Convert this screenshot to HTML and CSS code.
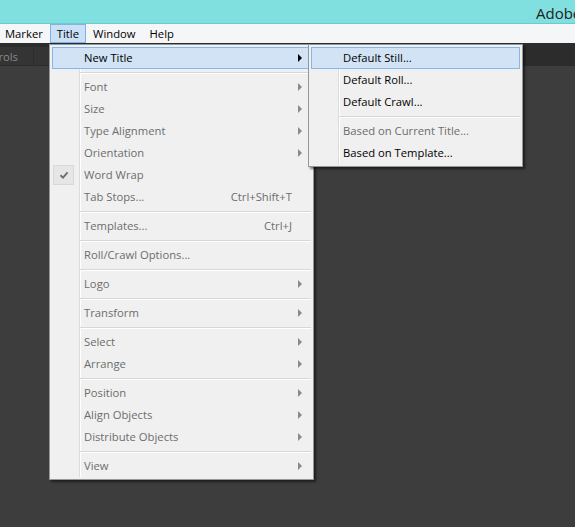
FILE: index.html
```html
<!DOCTYPE html>
<html>
<head>
<meta charset="utf-8">
<link rel="stylesheet" href="styles.css">
</head>
<body>
<div class="titlebar"><span class="app-title">Adobe Premiere Pro</span></div>
<div class="menubar">
  <span class="mb-item first">Marker</span><span class="mb-item active">Title</span><span class="mb-item">Window</span><span class="mb-item">Help</span>
</div>
<div class="workspace">
  <div class="tabstrip">
    <div class="tab"><span class="tab-text">Controls</span></div>
    <div class="tab tab2"></div>
  </div>
</div>

<div class="menu main-menu">
  <div class="menu-list">
    <div class="item active"><span class="icon"></span><span class="label">New Title</span><span class="arrow"></span></div>
    <div class="sep"></div>
    <div class="item disabled"><span class="icon"></span><span class="label">Font</span><span class="arrow"></span></div>
    <div class="item disabled"><span class="icon"></span><span class="label">Size</span><span class="arrow"></span></div>
    <div class="item disabled"><span class="icon"></span><span class="label">Type Alignment</span><span class="arrow"></span></div>
    <div class="item disabled"><span class="icon"></span><span class="label">Orientation</span><span class="arrow"></span></div>
    <div class="item disabled"><span class="icon check"><svg width="10" height="10" viewBox="0 0 10 10"><path d="M1.5 5.2 L4 7.6 L8.6 2.4" fill="none" stroke="#6e6e6e" stroke-width="1.9"/></svg></span><span class="label">Word Wrap</span><span class="arrow none"></span></div>
    <div class="item disabled"><span class="icon"></span><span class="label">Tab Stops...</span><span class="shortcut">Ctrl+Shift+T</span><span class="arrow none"></span></div>
    <div class="sep"></div>
    <div class="item disabled"><span class="icon"></span><span class="label">Templates...</span><span class="shortcut">Ctrl+J</span><span class="arrow none"></span></div>
    <div class="sep"></div>
    <div class="item disabled"><span class="icon"></span><span class="label">Roll/Crawl Options...</span><span class="arrow none"></span></div>
    <div class="sep"></div>
    <div class="item disabled"><span class="icon"></span><span class="label">Logo</span><span class="arrow"></span></div>
    <div class="sep"></div>
    <div class="item disabled"><span class="icon"></span><span class="label">Transform</span><span class="arrow"></span></div>
    <div class="sep"></div>
    <div class="item disabled"><span class="icon"></span><span class="label">Select</span><span class="arrow"></span></div>
    <div class="item disabled"><span class="icon"></span><span class="label">Arrange</span><span class="arrow"></span></div>
    <div class="sep"></div>
    <div class="item disabled"><span class="icon"></span><span class="label">Position</span><span class="arrow"></span></div>
    <div class="item disabled"><span class="icon"></span><span class="label">Align Objects</span><span class="arrow"></span></div>
    <div class="item disabled"><span class="icon"></span><span class="label">Distribute Objects</span><span class="arrow"></span></div>
    <div class="sep"></div>
    <div class="item disabled"><span class="icon"></span><span class="label">View</span><span class="arrow"></span></div>
  </div>
</div>

<div class="menu sub-menu">
  <div class="menu-list">
    <div class="item active"><span class="icon"></span><span class="label">Default Still...</span></div>
    <div class="item"><span class="icon"></span><span class="label">Default Roll...</span></div>
    <div class="item"><span class="icon"></span><span class="label">Default Crawl...</span></div>
    <div class="sep"></div>
    <div class="item disabled"><span class="icon"></span><span class="label">Based on Current Title...</span></div>
    <div class="item"><span class="icon"></span><span class="label">Based on Template...</span></div>
  </div>
</div>
</body>
</html>
```

FILE: styles.css
```css
html, body {
  margin: 0;
  padding: 0;
}
body {
  width: 575px;
  height: 527px;
  overflow: hidden;
  background: #3d3d3d;
  font-family: "Open Sans", "Noto Sans", sans-serif;
  font-size: 11.25px;
  position: relative;
}
.titlebar {
  height: 23px;
  background: #80dfdf;
  border-bottom: 1px solid #6fcaca;
  overflow: hidden;
  white-space: nowrap;
  padding-left: 536px;
  box-sizing: content-box;
}
.app-title {
  font-size: 15px;
  line-height: 27px;
  color: #222;
}
.menubar {
  height: 19px;
  background: #f5f6f7;
  display: flex;
  align-items: stretch;
  padding-left: 0;
  color: #000;
}
.mb-item {
  border: 1px solid transparent;
  padding: 0 6px;
  line-height: 17px;
}
.mb-item.first {
  margin-left: -2px;
}
.mb-item.active {
  background: #c9e0f7;
  border-color: #7eb4ea;
}
.workspace {
  height: 484px;
}
.tabstrip {
  height: 23px;
  background: #2c2c2c;
  display: flex;
  padding-top: 4px;
  box-sizing: border-box;
  gap: 1px;
}
.tab {
  width: 33px;
  height: 18px;
  background: #343434;
  display: flex;
  justify-content: flex-end;
  align-items: center;
  overflow: hidden;
  white-space: nowrap;
  padding-right: 15px;
  box-sizing: border-box;
  color: #8a8a8a;
}
.tab2 {
  width: 16px;
  padding: 0;
}

.menu {
  position: absolute;
  background: #f0f0f0;
  border: 1px solid #979797;
  padding: 2px;
  box-sizing: border-box;
  box-shadow: 2px 2px 2px rgba(0, 0, 0, 0.5);
}
.main-menu {
  left: 49px;
  top: 44px;
  width: 265px;
}
.sub-menu {
  left: 308px;
  top: 44px;
  width: 215px;
}
.menu-list {
  background: linear-gradient(to right, transparent 27px, #dcdcdc 27px, #dcdcdc 28px, #ffffff 28px, #ffffff 29px, transparent 29px);
}
.item {
  height: 22px;
  box-sizing: border-box;
  border: 1px solid transparent;
  display: flex;
  align-items: center;
  padding-right: 8px;
  color: #000;
  line-height: 18px;
}
.item.active {
  background: #d1e3f5;
  border-color: #84b8eb;
}
.item.disabled {
  color: #6d6d6d;
}
.icon {
  width: 21px;
  height: 20px;
  flex: none;
  margin-right: 10px;
  box-sizing: border-box;
  display: flex;
  align-items: center;
  justify-content: center;
}
.icon.check {
  background: #e6e6e6;
  border: 1px solid #d8d8d8;
}
.label {
  flex: 1;
  white-space: nowrap;
  margin-top: -1px;
}
.shortcut {
  margin-right: 6px;
  margin-top: -1px;
  white-space: nowrap;
}
.arrow {
  width: 0;
  height: 0;
  border-left: 4px solid #8a8a8a;
  border-top: 4px solid transparent;
  border-bottom: 4px solid transparent;
  flex: none;
}
.item.active .arrow {
  border-left-color: #000;
}
.arrow.none {
  border-left-color: transparent;
}
.sep {
  height: 7px;
  margin-left: 28px;
  box-sizing: border-box;
  padding-top: 3px;
}
.sep::after {
  content: "";
  display: block;
  height: 1px;
  background: #d7d7d7;
  border-bottom: 1px solid #ffffff;
}
```
